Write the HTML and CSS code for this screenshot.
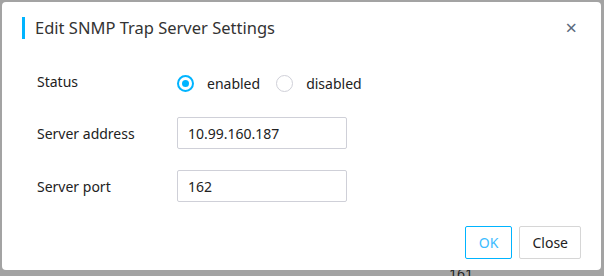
FILE: index.html
```html
<!DOCTYPE html>
<html lang="en">
<head>
  <meta charset="UTF-8" />
  <title>Edit SNMP Trap Server Settings</title>
  <link rel="stylesheet" href="styles.css">
</head>
<body>
  <!-- page content under the mask -->
  <div class="page">
    <span class="page-cell">161</span>
  </div>

  <div class="mask"></div>

  <div class="dialog">
    <div class="dialog-header">
      <h3 class="dialog-title">Edit SNMP Trap Server Settings</h3>
      <span class="dialog-close">&times;</span>
    </div>

    <form class="dialog-body">
      <div class="form-row">
        <label class="form-label">Status</label>
        <div class="radio-group">
          <label class="radio checked"><span class="radio-dot"></span>enabled</label>
          <label class="radio"><span class="radio-dot"></span>disabled</label>
        </div>
      </div>
      <div class="form-row">
        <label class="form-label">Server address</label>
        <input type="text" class="form-input" value="10.99.160.187" />
      </div>
      <div class="form-row">
        <label class="form-label">Server port</label>
        <input type="text" class="form-input" value="162" />
      </div>
    </form>

    <div class="dialog-footer">
      <button class="btn btn-primary">OK</button>
      <button class="btn">Close</button>
    </div>
  </div>
</body>
</html>
```

FILE: styles.css
```css
:root {
  --accent: #00b4ff;
  --text: #222;
  --border: #cfd0d8;
  --mask: #a3a3a3;
}

* {
  box-sizing: border-box;
  margin: 0;
  padding: 0;
}

body {
  font-family: 'Noto Sans', 'Open Sans', sans-serif;
  color: var(--text);
  background: #fff;
  width: 604px;
  height: 276px;
  overflow: hidden;
  position: relative;
}

/* Content behind the dialog */
.page {
  height: 276px;
  position: relative;
}
.page-cell {
  position: absolute;
  left: 449px;
  top: 264px;
  font-size: 14px;
  color: #333;
}

.mask {
  position: absolute;
  inset: 0;
  background: rgba(0,0,0,0.36);
}

/* Dialog */
.dialog {
  position: absolute;
  left: 2px;
  top: 2px;
  width: 599px;
  height: 268px;
  background: #fff;
  border-radius: 4px;
  display: flex;
  flex-direction: column;
}

.dialog-header {
  display: flex;
  align-items: center;
  justify-content: space-between;
  padding: 14px 24px 0 20px;
  height: 38px;
}
.dialog-title {
  font-size: 16.5px;
  font-weight: 400;
  color: #333;
  border-left: 3px solid var(--accent);
  padding-left: 10px;
  line-height: 22px;
}
.dialog-close {
  font-size: 20px;
  color: #5b6a7d;
  line-height: 1;
  cursor: pointer;
}

.dialog-body {
  padding: 32px 0 0 35px;
  display: flex;
  flex-direction: column;
  gap: 21px;
}
.form-row {
  display: flex;
  align-items: center;
  font-size: 14px;
}
.form-row:first-child {
  margin-bottom: 2px;
}
.form-label {
  width: 140px;
}
.form-row:first-child .form-label {
  margin-top: -4px;
}

.radio-group {
  display: flex;
  gap: 16px;
}
.radio {
  display: flex;
  align-items: center;
  gap: 13px;
  height: 22px;
}
.radio-dot {
  width: 17px;
  height: 17px;
  border-radius: 50%;
  border: 1px solid var(--border);
  display: flex;
  align-items: center;
  justify-content: center;
}
.radio.checked .radio-dot {
  border: 2px solid var(--accent);
}
.radio.checked .radio-dot::after {
  content: '';
  width: 7px;
  height: 7px;
  border-radius: 50%;
  background: var(--accent);
}

.form-input {
  width: 170px;
  height: 32px;
  border: 1px solid var(--border);
  border-radius: 2px;
  padding: 0 10px;
  font-family: inherit;
  font-size: 14px;
  color: var(--text);
}

.dialog-footer {
  margin-top: auto;
  display: flex;
  justify-content: flex-end;
  gap: 7px;
  padding: 0 20px 11px 0;
}
.btn {
  height: 33px;
  padding: 0 12px;
  background: #fff;
  border: 1px solid #d6d6d6;
  border-radius: 2px;
  font-family: inherit;
  font-size: 14px;
  color: var(--text);
}
.btn-primary {
  border-color: var(--accent);
  color: #3cbcff;
  padding: 0 13px;
}
```
